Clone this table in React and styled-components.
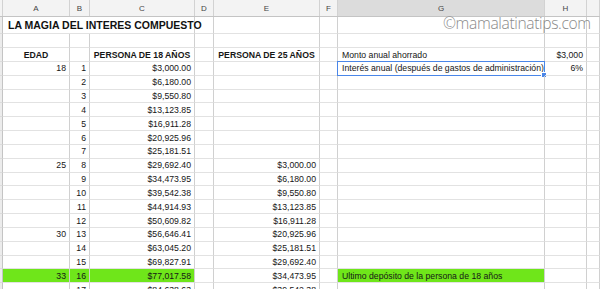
import React from 'react'
import styled, { createGlobalStyle } from 'styled-components'

const Global = createGlobalStyle`
  html, body { margin: 0; padding: 0; background: #fff; }
  body { font-family: "Liberation Sans", Arial, sans-serif; overflow: hidden; }
`

const COLS = '3px 67px 20px 105px 19px 106px 18px 207px 42px 13px'
const GREEN = '#6fe61a'

const Sheet = styled.div`
  position: relative;
  width: 600px;
  height: 289px;
  overflow: hidden;
  background: #fff;
`

const HeadRow = styled.div`
  display: grid;
  grid-template-columns: ${COLS};
  height: 17px;
  background: #f3f3f3;
  border-bottom: 1px solid #c4c4c4;
  box-sizing: border-box;
`

const HeadCell = styled.div`
  display: flex;
  align-items: center;
  justify-content: center;
  font-size: 8px;
  color: #444;
  border-right: 1px solid #d2d2d2;
  background: ${p => (p.$active ? '#dcdcdc' : 'transparent')};
`

const Row = styled.div`
  display: grid;
  grid-template-columns: ${COLS};
  height: ${p => p.$h}px;
`

const Gutter = styled.div`
  background: #ececec;
  border-right: 1px solid #c4c4c4;
  border-bottom: 1px solid #dcdcdc;
`

const Cell = styled.div`
  position: relative;
  display: flex;
  align-items: center;
  justify-content: ${p => (p.$align === 'right' ? 'flex-end' : p.$align === 'center' ? 'center' : 'flex-start')};
  padding: 0 ${p => (p.$align === 'right' ? '3px' : '0')} 0 ${p => (p.$align === 'left' ? '4px' : '0')};
  box-sizing: border-box;
  border-right: 1px solid #d0d0d0;
  border-bottom: 1px solid #e2e2e2;
  background: ${p => (p.$green ? GREEN : 'transparent')};
  font-size: 8.7px;
  font-weight: ${p => (p.$bold ? 700 : 400)};
  color: #161616;
  white-space: nowrap;
  grid-column: ${p => (p.$span ? `span ${p.$span}` : 'auto')};
`

const Title = styled.span`
  font-size: 10.5px;
  font-weight: 700;
  color: #111;
  margin-left: 1px;
`

const Selection = styled.div`
  position: absolute;
  inset: -1px;
  border: 1px solid #4a86e8;
  pointer-events: none;
`

const Handle = styled.div`
  position: absolute;
  right: -3px;
  bottom: -3px;
  width: 4px;
  height: 4px;
  background: #4a86e8;
  border: 1px solid #fff;
`

const Watermark = styled.div`
  position: absolute;
  left: 443px;
  top: 16px;
  line-height: 1;
  font-family: "Open Sans", "Lato", sans-serif;
  font-weight: 300;
  font-size: 15.6px;
  color: #8a8a8a;
  letter-spacing: -0.35px;
  pointer-events: none;
`

const letters = ['', 'A', 'B', 'C', 'D', 'E', 'F', 'G', 'H', '']

const c18 = ['$3,000.00', '$6,180.00', '$9,550.80', '$13,123.85', '$16,911.28', '$20,925.96', '$25,181.51', '$29,692.40', '$34,473.95', '$39,542.38', '$44,914.93', '$50,609.82', '$56,646.41', '$63,045.20', '$69,827.91', '$77,017.58', '$84,638.63']
const ages = { 1: '18', 8: '25', 13: '30', 16: '33' }

const dataRows = c18.map((c, i) => {
  const n = i + 1
  return {
    a: ages[n] || '',
    b: String(n),
    c,
    e: n >= 8 ? c18[n - 8] : '',
    g: n === 1 ? 'Interés anual (después de gastos de administración)' : n === 16 ? 'Ultimo depósito de la persona de 18 años' : '',
    h: n === 1 ? '6%' : '',
    green: n === 16,
    selected: n === 1,
  }
})

const BlankCells = ({ count }) =>
  Array.from({ length: count }).map((_, i) => <Cell key={i} />)

export default function App() {
  return (
    <>
      <Global />
      <Sheet>
        <HeadRow>
          {letters.map((l, i) => (
            <HeadCell key={i} $active={l === 'G'}>{l}</HeadCell>
          ))}
        </HeadRow>

        <Row $h={17}>
          <Gutter />
          <Cell $span={3} $align="left"><Title>LA MAGIA DEL INTERES COMPUESTO</Title></Cell>
          <BlankCells count={6} />
        </Row>

        <Row $h={14}>
          <Gutter />
          <BlankCells count={9} />
        </Row>

        <Row $h={14}>
          <Gutter />
          <Cell $align="center" $bold>EDAD</Cell>
          <Cell />
          <Cell $align="center" $bold>PERSONA DE 18 AÑOS</Cell>
          <Cell />
          <Cell $align="center" $bold>PERSONA DE 25 AÑOS</Cell>
          <Cell />
          <Cell $align="left">Monto anual ahorrado</Cell>
          <Cell $align="right">$3,000</Cell>
          <Cell />
        </Row>

        {dataRows.map(r => (
          <Row key={r.b} $h={13.83}>
            <Gutter />
            <Cell $align="right" $green={r.green}>{r.a}</Cell>
            <Cell $align="right" $green={r.green}>{r.b}</Cell>
            <Cell $align="right" $green={r.green}>{r.c}</Cell>
            <Cell />
            <Cell $align="right">{r.e}</Cell>
            <Cell />
            <Cell $align="left" $green={r.green}>
              {r.g}
              {r.selected && (
                <Selection>
                  <Handle />
                </Selection>
              )}
            </Cell>
            <Cell $align="right">{r.h}</Cell>
            <Cell />
          </Row>
        ))}

        <Watermark>©mamalatinatips.com</Watermark>
      </Sheet>
    </>
  )
}
